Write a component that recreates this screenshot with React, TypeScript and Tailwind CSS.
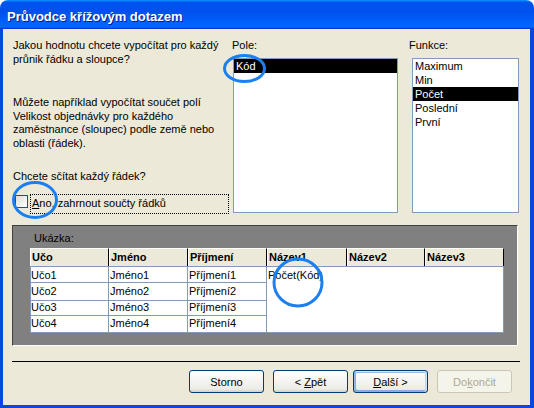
import React from "react";

function XPButton({ children, variant }: { children: React.ReactNode; variant?: "default" | "disabled" }) {
  if (variant === "disabled") {
    return (
      <div className="w-[75px] h-[23px] rounded-[3px] border border-[#c9c7ba] bg-[#f5f4ea] text-[#aca899] flex items-center justify-center leading-[14px]">
        <span className="whitespace-pre">{children}</span>
      </div>
    );
  }
  return (
    <div
      className={
        "w-[75px] h-[23px] rounded-[3px] border border-[#003c74] bg-[linear-gradient(180deg,#fff,#ecebe6_86%,#d6d0c5)] flex items-center justify-center leading-[14px] " +
        (variant === "default"
          ? "shadow-[inset_-1px_1px_#cee7ff,inset_1px_2px_#98b8ea,inset_-2px_0_#bcd4f6,inset_1px_-1px_#89ade4,inset_2px_-2px_#89ade4]"
          : "")
      }
    >
      <span className="whitespace-pre">{children}</span>
    </div>
  );
}

function HeaderCell({ w, label }: { w: string; label: string }) {
  return (
    <div className={w + " h-[18px] bg-[#ece9d8] border-l border-t border-l-white border-t-white border-r border-r-black pl-[1px] font-bold leading-[16px]"}>
      {label}
    </div>
  );
}

export default function App() {
  const rows = [
    { h: "h-[16px]", pt: "pt-[2px]", n: "1" },
    { h: "h-[18px]", pt: "pt-[2px]", n: "2" },
    { h: "h-[15px]", pt: "pt-0", n: "3" },
    { h: "h-[17px]", pt: "pt-[1px]", n: "4" },
  ];
  return (
    <div className="relative w-[534px] h-[408px] bg-white overflow-hidden font-[family-name:'Liberation_Sans',Arial,sans-serif] text-[11px] text-black">
      <div className="flex flex-col w-[534px] h-[408px]">
        <div className="h-[29px] shrink-0 rounded-t-[8px] bg-[linear-gradient(180deg,#0997ff,#0053ee_8%,#0050ee_40%,#0066ff_88%,#0066ff_93%,#005bff_95%,#003dd7_96%,#003dd7)] pl-[7px] pt-[9px]">
          <div className="text-white font-bold text-[13px] leading-[16px] [text-shadow:1px_1px_#0a1a8a]">
            Průvodce křížovým dotazem
          </div>
        </div>
        <div className="flex-1 border-l-[3px] border-r-[4px] border-b-[3px] border-[#0848dc] bg-[#ece9d8] flex flex-col">
          {/* top area */}
          <div className="flex h-[185px] shrink-0">
            <div className="ml-[10px] w-[216px] flex flex-col">
              <div className="mt-[9px] leading-[14px] whitespace-nowrap">
                Jakou hodnotu chcete vypočítat pro každý
                <br />
                průnik řádku a sloupce?
              </div>
              <div className="mt-[30px] leading-[13.5px] whitespace-nowrap">
                Můžete například vypočítat součet polí
                <br />
                Velikost objednávky pro každého
                <br />
                zaměstnance (sloupec) podle země nebo
                <br />
                oblasti (řádek).
              </div>
              <div className="mt-[19px] leading-[14px] whitespace-nowrap">Chcete sčítat každý řádek?</div>
              <div className="mt-[11px] flex items-start">
                <div className="ml-[2px] mt-[1px] w-[13px] h-[13px] border border-[#1c5180] bg-[linear-gradient(135deg,#dcdcd7,#fff)]" />
                <div className="ml-[2px] w-[200px] h-[20px] border border-dotted border-black pl-[1px] leading-[16px] whitespace-nowrap">
                  <span className="underline">A</span>no, zahrnout součty řádků
                </div>
              </div>
            </div>
            <div className="ml-[3px] flex flex-col">
              <div className="mt-[9px] leading-[14px]">Pole:</div>
              <div className="mt-[6px] ml-[1px] w-[165px] h-[155px] border border-[#7f9db9] bg-white">
                <div className="h-[14px] leading-[14px] pl-[2px] bg-black text-white">Kód</div>
              </div>
            </div>
            <div className="ml-[11px] flex flex-col">
              <div className="mt-[9px] leading-[14px]">Funkce:</div>
              <div className="mt-[6px] ml-[3px] w-[107px] h-[155px] border border-[#7f9db9] bg-white">
                <div className="h-[14px] leading-[14px] pl-[2px]">Maximum</div>
                <div className="h-[14px] leading-[14px] pl-[2px]">Min</div>
                <div className="h-[14px] leading-[14px] pl-[2px] bg-black text-white">Počet</div>
                <div className="h-[14px] leading-[14px] pl-[2px]">Poslední</div>
                <div className="h-[14px] leading-[14px] pl-[2px]">První</div>
              </div>
            </div>
          </div>

          {/* preview */}
          <div className="mt-[11px] ml-[9px] w-[506px] h-[121px] shrink-0 bg-[#808080] border border-t-[#404040] border-l-[#404040] border-r-white border-b-white flex flex-col">
            <div className="ml-[21px] mt-[5px] leading-[14px]">Ukázka:</div>
            <div className="ml-[17px] mt-[3px] flex flex-col">
              <div className="flex">
                <HeaderCell w="w-[79px]" label="Učo" />
                <HeaderCell w="w-[79px]" label="Jméno" />
                <HeaderCell w="w-[79px]" label="Příjmení" />
                <HeaderCell w="w-[80px]" label="Název1" />
                <HeaderCell w="w-[78px]" label="Název2" />
                <HeaderCell w="w-[79px]" label="Název3" />
              </div>
              <div className="flex">
                <div className="flex flex-col border-l border-b border-[#7f9db9] bg-white">
                  {rows.map((r) => (
                    <div key={r.n} className={"flex " + r.h}>
                      <div className={"w-[78px] border-t border-r border-[#7f9db9] leading-[13px] pl-[0px] " + r.pt}>Učo{r.n}</div>
                      <div className={"w-[79px] border-t border-r border-[#7f9db9] leading-[13px] pl-[1px] " + r.pt}>Jméno{r.n}</div>
                      <div className={"w-[79px] border-t border-r border-[#7f9db9] leading-[13px] pl-[1px] " + r.pt}>Příjmení{r.n}</div>
                    </div>
                  ))}
                </div>
                <div className="w-[237px] h-[67px] border-t border-r border-b border-[#7f9db9] bg-white pl-[1px] pt-[2px] leading-[13px]">
                  Počet(Kód)
                </div>
              </div>
            </div>
          </div>

          <div className="mt-[15px] ml-[9px] w-[508px] h-[1px] bg-black shrink-0" />

          <div className="mt-[8px] flex shrink-0">
            <div className="ml-[186px]">
              <XPButton>Storno</XPButton>
            </div>
            <div className="ml-[9px]">
              <XPButton>
                {"< "}<span className="underline">Z</span>pět
              </XPButton>
            </div>
            <div className="ml-[5px]">
              <XPButton variant="default">
                <span className="underline">D</span>alší{" >"}
              </XPButton>
            </div>
            <div className="ml-[9px]">
              <XPButton variant="disabled">
                Do<span className="underline">k</span>ončit
              </XPButton>
            </div>
          </div>
        </div>
      </div>

      <svg className="absolute left-0 top-0 pointer-events-none" width="534" height="408" viewBox="0 0 534 408">
        <ellipse cx="244.5" cy="68.5" rx="20" ry="13" fill="none" stroke="#1b7ff2" strokeWidth="3" />
        <ellipse cx="35" cy="200" rx="21.5" ry="17.5" fill="none" stroke="#1b7ff2" strokeWidth="3" />
        <ellipse cx="298" cy="282.5" rx="24" ry="23.5" fill="none" stroke="#1b7ff2" strokeWidth="3" />
      </svg>
    </div>
  );
}
